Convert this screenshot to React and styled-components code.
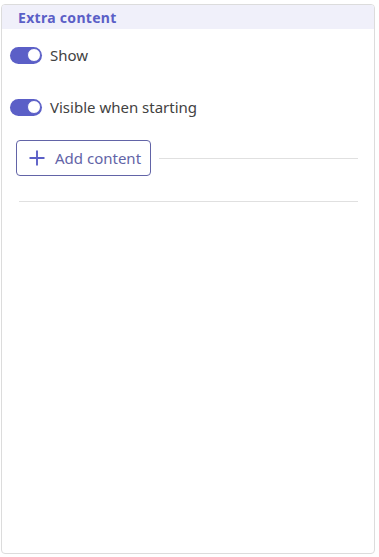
import React from "react";
import styled, { createGlobalStyle } from "styled-components";

const GlobalStyle = createGlobalStyle`
  html, body {
    margin: 0;
    padding: 0;
    background: #ffffff;
  }
  body {
    font-family: "Noto Sans", "Open Sans", sans-serif;
  }
`;

// ! Panel
const Panel = styled.section`
  box-sizing: border-box;
  margin: 4px 4px 0 1px;
  height: 550px;
  border: 1px solid #dcdcdc;
  border-radius: 4px;
  background: #ffffff;
  overflow: hidden;
`;

const PanelHeader = styled.div`
  height: 24px;
  background: #f0f0fa;
  display: flex;
  align-items: center;
  padding-left: 16px;
  font-size: 14px;
  font-weight: 700;
  color: #5b5fc7;
  letter-spacing: 0.3px;
`;

const PanelBody = styled.div`
  padding: 10px 16px 0 8px;
  display: flex;
  flex-direction: column;
`;

// ! Toggle
const ToggleRow = styled.label`
  display: flex;
  align-items: center;
  gap: 8px;
  height: 32px;
  margin-bottom: ${p => p.$spacing || 0}px;
  font-size: 15px;
  color: #424242;
`;

const Track = styled.span`
  position: relative;
  box-sizing: border-box;
  width: 32px;
  height: 17px;
  border-radius: 9px;
  background: ${p => (p.$on ? "#5b5fc7" : "#c8c8c8")};
  flex-shrink: 0;
`;

const Knob = styled.span`
  position: absolute;
  top: 1.5px;
  left: ${p => (p.$on ? "17px" : "1px")};
  box-sizing: border-box;
  width: 14px;
  height: 14px;
  border-radius: 50%;
  background: #ffffff;
  border: 1px solid #5b5fc7;
`;

const Toggle = ({ label, on = true, spacing }) => (
  <ToggleRow $spacing={spacing}>
    <Track $on={on}>
      <Knob $on={on} />
    </Track>
    {label}
  </ToggleRow>
);

// ! Add content
const AddRow = styled.div`
  display: flex;
  align-items: center;
  gap: 8px;
  margin-top: 17px;
  padding-left: 6px;
`;

const AddButton = styled.button`
  box-sizing: border-box;
  height: 36px;
  display: flex;
  align-items: center;
  gap: 10px;
  padding: 0 9px 0 12px;
  border: 1px solid #6264a7;
  border-radius: 4px;
  background: #ffffff;
  color: #6264a7;
  font-family: inherit;
  font-size: 15px;
  cursor: pointer;
`;

const Line = styled.div`
  flex: 1;
  height: 1px;
  background: #e0e0e0;
`;

const Divider = styled.div`
  height: 1px;
  background: #e0e0e0;
  margin: 25px 0 0 9px;
`;

const PlusIcon = () => (
  <svg width="16" height="16" viewBox="0 0 16 16">
    <path d="M8 0.5v15M0.5 8h15" stroke="#5b5fc7" strokeWidth="1.9" fill="none" />
  </svg>
);

export default function App() {
  return (
    <>
      <GlobalStyle />
      <Panel>
        <PanelHeader>Extra content</PanelHeader>
        <PanelBody>
          <Toggle label="Show" spacing={20} />
          <Toggle label="Visible when starting" />
          <AddRow>
            <AddButton>
              <PlusIcon />
              Add content
            </AddButton>
            <Line />
          </AddRow>
          <Divider />
        </PanelBody>
      </Panel>
    </>
  );
}
